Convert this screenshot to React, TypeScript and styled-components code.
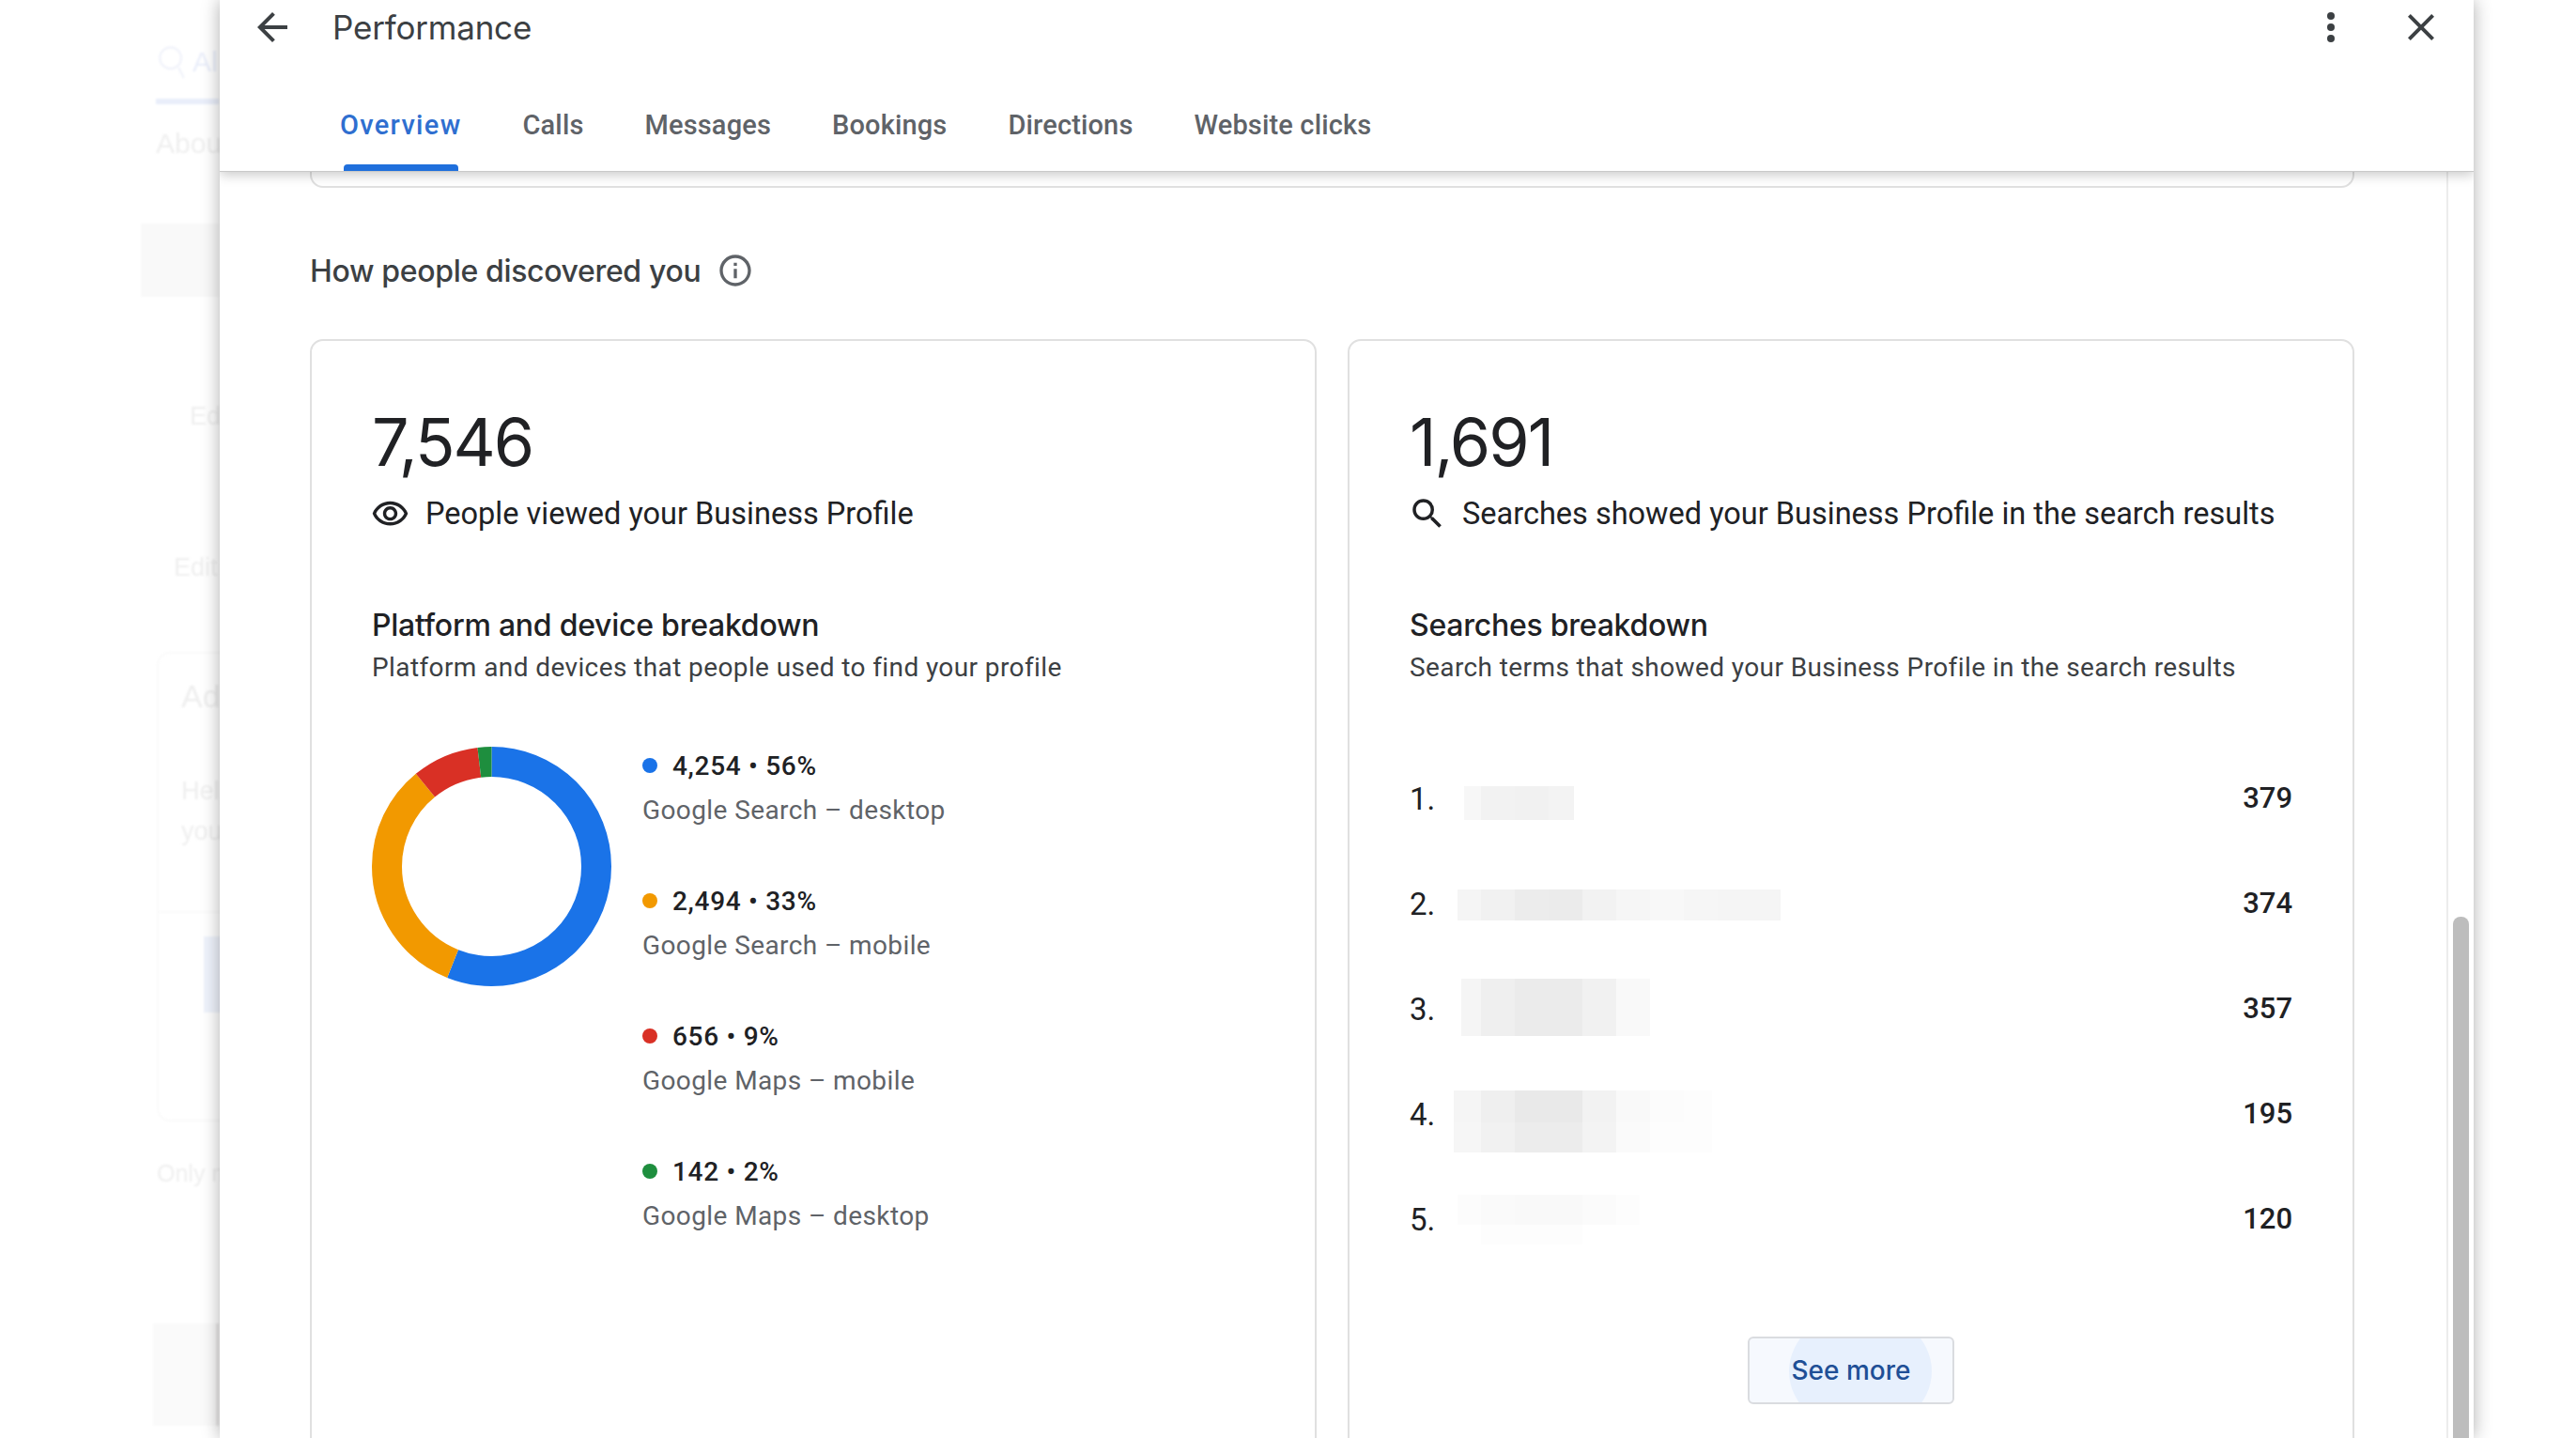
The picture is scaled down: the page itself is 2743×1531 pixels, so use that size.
import React from "react";
import styled, { createGlobalStyle } from "styled-components";

const GlobalStyle = createGlobalStyle`
  html, body {
    margin: 0;
    padding: 0;
    background: #fff;
    font-family: Roboto, "Liberation Sans", sans-serif;
  }
  * {
    box-sizing: border-box;
  }
`;

const Page = styled.div`
  position: relative;
  width: 2743px;
  height: 1531px;
  overflow: hidden;
  background: #fff;
`;

/* faded page behind the dialog */
const Backdrop = styled.div`
  width: 233px;
  height: 100%;
  white-space: nowrap;
  display: flex;
  flex-direction: column;
  font-family: "Liberation Sans", sans-serif;
  color: #efefef;
  filter: blur(0.8px);
`;

const FadedSearch = styled.div`
  display: flex;
  align-items: center;
  gap: 5px;
  height: 50px;
  margin: 41px 0 0 166px;
  font-size: 30px;
  color: #eaeefa;
`;

const FadedUnderline = styled.div`
  height: 6px;
  margin: 14px 0 0 166px;
  background: #e9eefa;
`;

const FadedText = styled.div<{ $top: number; $left: number; $size?: number }>`
  margin: ${(p) => p.$top}px 0 0 ${(p) => p.$left}px;
  font-size: ${(p) => p.$size ?? 27}px;
  line-height: 36px;
`;

const FadedBlock = styled.div<{ $top: number; $left: number; $height: number; $color: string }>`
  height: ${(p) => p.$height}px;
  margin: ${(p) => p.$top}px 0 0 ${(p) => p.$left}px;
  background: ${(p) => p.$color};
`;

const FadedCard = styled.div`
  height: 500px;
  margin: 72px -20px 0 167px;
  padding: 27px 0 0 24px;
  border: 2px solid #fafafa;
  border-radius: 14px;
`;

const FadedCardRule = styled.div`
  height: 2px;
  margin: 67px -24px 0;
  background: #fafafa;
`;

/* dialog */
const Dialog = styled.div`
  position: absolute;
  top: 0;
  left: 234px;
  width: 2400px;
  height: 1531px;
  background: #fff;
  box-shadow: 0 0 18px rgba(0, 0, 0, 0.32);
  overflow: hidden;
`;

const Header = styled.header`
  position: relative;
  z-index: 2;
  height: 183px;
  background: #fff;
  border-bottom: 1px solid #c9c9c9;
  box-shadow: 0 3px 12px rgba(0, 0, 0, 0.22);
`;

const TopRow = styled.div`
  display: flex;
  align-items: center;
  height: 58px;
  padding: 0 32px;
`;

const Title = styled.h1`
  flex: 1;
  margin: 0 0 0 40px;
  font-family: Inter, Roboto, sans-serif;
  font-size: 35px;
  font-weight: 400;
  letter-spacing: -0.2px;
  color: #3c4043;
`;

const HeaderIcon = styled.svg`
  display: block;
  width: 48px;
  height: 48px;
  fill: #3c4043;
`;

const Kebab = styled.svg`
  display: block;
  width: 48px;
  height: 48px;
  margin-right: 48px;
  fill: #3c4043;
`;

const TabRow = styled.nav`
  display: flex;
  gap: 65px;
  height: 98px;
  margin-top: 26px;
  padding-left: 128px;
`;

const Tab = styled.div<{ $active?: boolean }>`
  position: relative;
  display: flex;
  align-items: center;
  font-size: 29px;
  font-weight: 500;
  letter-spacing: ${(p) => (p.$active ? "1.3px" : "0.15px")};
  color: ${(p) => (p.$active ? "#2f6fd0" : "#5f6368")};

  ${(p) =>
    p.$active &&
    `
    &::after {
      content: "";
      position: absolute;
      left: 4px;
      right: 3px;
      bottom: 0;
      height: 7px;
      border-radius: 4px 4px 0 0;
      background: #1f6fdc;
    }
  `}
`;

const Body = styled.div`
  display: flex;
  flex-direction: column;
  padding: 0 127px 0 96px;
`;

const ScrollTrack = styled.div`
  position: absolute;
  top: 183px;
  right: 0;
  bottom: 0;
  width: 29px;
  border-left: 2px solid #ececec;
`;

const ScrollThumb = styled.div`
  position: absolute;
  top: 976px;
  right: 5px;
  bottom: 0;
  width: 17px;
  border-radius: 8px 8px 0 0;
  background: #bdbdbd;
`;

const PrevCardEnd = styled.div`
  height: 17px;
  border: 2px solid #e0e0e0;
  border-top: 0;
  border-radius: 0 0 14px 14px;
`;

const SectionHeading = styled.div`
  display: flex;
  align-items: center;
  gap: 17px;
  height: 40px;
  margin-top: 68px;
  font-family: Inter, Roboto, sans-serif;
  font-size: 32px;
  font-weight: 500;
  letter-spacing: -0.34px;
  color: #3c4043;
`;

const InfoIcon = styled.svg`
  display: block;
  width: 40px;
  height: 40px;
  fill: #5f6368;
`;

const CardRow = styled.div`
  display: flex;
  gap: 33px;
  margin-top: 53px;
`;

const Card = styled.section`
  flex: 1;
  height: 1300px;
  padding: 68px 64px 0;
  border: 2px solid #e0e0e0;
  border-radius: 14px;
`;

const BigNumber = styled.div`
  height: 80px;
  font-family: Inter, Roboto, sans-serif;
  font-size: 70px;
  font-weight: 400;
  line-height: 80px;
  letter-spacing: -2px;
  color: #202124;
`;

const MetricRow = styled.div`
  display: flex;
  align-items: center;
  height: 40px;
  margin-top: 16px;
  font-size: 32.5px;
  color: #202124;
`;

const MetricIcon = styled.svg<{ $size: number; $gap: number; $shift: number }>`
  display: block;
  flex: none;
  width: ${(p) => p.$size}px;
  height: ${(p) => p.$size}px;
  margin-left: ${(p) => p.$shift}px;
  margin-right: ${(p) => p.$gap}px;
  fill: #202124;
`;

const BreakdownTitle = styled.h2`
  height: 40px;
  margin: 79px 0 0;
  font-family: Inter, Roboto, sans-serif;
  font-size: 32px;
  font-weight: 500;
  line-height: 40px;
  letter-spacing: -0.25px;
  color: #202124;
`;

const BreakdownSub = styled.p`
  height: 40px;
  margin: 5px 0 0;
  font-size: 28px;
  line-height: 40px;
  letter-spacing: 0.4px;
  color: #3c4043;
`;

const BreakdownArea = styled.div`
  display: flex;
  gap: 33px;
  margin-top: 64px;
`;

const Donut = styled.svg`
  display: block;
  flex: none;
  width: 255px;
  height: 255px;
`;

const Legend = styled.ul`
  display: flex;
  flex-direction: column;
  gap: 56px;
  margin: 0;
  padding: 0;
  list-style: none;
`;

const LegendValue = styled.div`
  display: flex;
  align-items: center;
  gap: 16px;
  height: 40px;
  font-size: 28px;
  font-weight: 500;
  letter-spacing: 0.7px;
  color: #202124;
`;

const Dot = styled.span<{ $color: string }>`
  width: 16px;
  height: 16px;
  border-radius: 50%;
  background: ${(p) => p.$color};
`;

const LegendLabel = styled.div`
  height: 40px;
  margin-top: 8px;
  font-size: 28px;
  line-height: 40px;
  letter-spacing: 0.4px;
  color: #5f6368;
`;

const TermList = styled.ol`
  margin: 63px 0 0;
  padding: 0;
  list-style: none;
`;

const TermRow = styled.li`
  display: flex;
  align-items: center;
  height: 112px;
  font-size: 33px;
  color: #202124;
`;

const TermIndex = styled.span`
  width: 38px;
`;

const TermMosaic = styled.svg`
  display: block;
  flex: 1;
  height: 112px;
`;

const TermCount = styled.span`
  margin-bottom: 2px;
  font-weight: 500;
  font-size: 31px;
`;

const SeeMoreWrap = styled.div`
  display: flex;
  justify-content: center;
  margin-top: 69px;
`;

const SeeMore = styled.button`
  position: relative;
  width: 220px;
  height: 72px;
  padding: 0;
  overflow: hidden;
  border: 2px solid #dadce0;
  border-radius: 6px;
  background: #f6f9fe;
  font-family: Inter, Roboto, sans-serif;
  font-size: 28px;
  font-weight: 500;
  color: #1f4f96;

  &::before {
    content: "";
    position: absolute;
    top: -30px;
    left: 42px;
    width: 152px;
    height: 130px;
    border-radius: 50%;
    background: #e7f0fd;
  }
`;

const SeeMoreLabel = styled.span`
  position: relative;
`;

const legend = [
  { value: "4,254 • 56%", label: "Google Search – desktop", color: "#1a73e8", share: 56 },
  { value: "2,494 • 33%", label: "Google Search – mobile", color: "#f29900", share: 33 },
  { value: "656 • 9%", label: "Google Maps – mobile", color: "#d93025", share: 9 },
  { value: "142 • 2%", label: "Google Maps – desktop", color: "#1e8e3e", share: 2 },
];

// x, y, w, h, grey value of the pixelated search terms, y inside a 112px row
type Cell = [number, number, number, number, string];
const strip = (x0: number, y: number, h: number, shades: string[]): Cell[] => {
  const edges = [38, 74, 110, 146, 182, 218, 254, 290, 326, 362];
  return shades.map((shade, i) => {
    const left = i === 0 ? x0 : edges[i - 1];
    return [left, y, edges[i] - left, h, shade];
  });
};

const terms: { count: string; cells: Cell[] }[] = [
  {
    count: "379",
    cells: [
      ...strip(20, 43, 36, ["#f7f7f7", "#f2f2f2", "#f1f1f1"]),
      [110, 43, 27, 36, "#f3f3f3"],
    ],
  },
  {
    count: "374",
    cells: strip(13, 41, 33, ["#f5f5f5", "#f1f1f1", "#ececec", "#ebebeb", "#f2f2f2", "#f6f6f6", "#f8f8f8", "#f6f6f6", "#f5f5f5"]).map(
      (c, i) => (i === 8 ? [c[0], c[1], 357 - c[0], c[3], c[4]] as Cell : c),
    ),
  },
  {
    count: "357",
    cells: strip(17, 24, 61, ["#f5f5f5", "#efefef", "#ebebeb", "#ebebeb", "#f1f1f1", "#f9f9f9"]),
  },
  {
    count: "195",
    cells: [
      ...strip(9, 31, 34, ["#f5f5f5", "#efefef", "#e9e9e9", "#e9e9e9", "#f2f2f2", "#f9f9f9", "#fcfcfc"]),
      ...strip(9, 65, 32, ["#f6f6f6", "#f1f1f1", "#ececec", "#ececec", "#f3f3f3", "#fafafa", "#fdfdfd"]),
      [254, 31, 30, 66, "#fdfdfd"],
    ],
  },
  {
    count: "120",
    cells: [
      ...strip(13, 30, 32, ["#fcfcfc", "#fafafa", "#f9f9f9", "#f9f9f9", "#fbfbfb"]),
      [182, 30, 25, 32, "#fdfdfd"],
      [38, 62, 108, 21, "#fdfdfd"],
    ],
  },
];

const RING_R = 111.5;
const RING_LEN = 2 * Math.PI * RING_R;

const App: React.FC = () => {
  let used = 0;

  return (
    <Page>
      <GlobalStyle />
      <Backdrop>
        <FadedSearch>
          <svg width="34" height="40" viewBox="0 0 24 28" fill="none" stroke="#f0f2fa" strokeWidth="1.5">
            <circle cx="11" cy="11" r="8" />
            <path d="M17 18l4 8" />
          </svg>
          Al
        </FadedSearch>
        <FadedUnderline />
        <FadedText $top={24} $left={166} $size={30}>
          About
        </FadedText>
        <FadedBlock $top={67} $left={150} $height={78} $color="#f9f9f9" />
        <FadedText $top={109} $left={202}>
          Edit
        </FadedText>
        <FadedText $top={125} $left={185}>
          Edit
        </FadedText>
        <FadedCard>
          <FadedText $top={0} $left={0} $size={34}>
            Add
          </FadedText>
          <FadedText $top={65} $left={0}>
            Help
          </FadedText>
          <FadedText $top={7} $left={0}>
            you
          </FadedText>
          <FadedCardRule />
          <FadedBlock $top={25} $left={24} $height={81} $color="#eff3fc" />
        </FadedCard>
        <FadedText $top={37} $left={167} $size={25}>
          Only manage
        </FadedText>
        <FadedBlock $top={142} $left={163} $height={109} $color="linear-gradient(90deg, #fafafa 0 66px, #fff 66px 67px, #e9e7e7 67px)" />
      </Backdrop>

      <Dialog>
        <Header>
          <TopRow>
            <HeaderIcon viewBox="0 0 24 24">
              <path d="M20 11H7.83l5.59-5.59L12 4l-8 8 8 8 1.41-1.41L7.83 13H20v-2z" />
            </HeaderIcon>
            <Title>Performance</Title>
            <Kebab viewBox="0 0 48 48">
              <circle cx="24" cy="12" r="4" />
              <circle cx="24" cy="24" r="4" />
              <circle cx="24" cy="36" r="4" />
            </Kebab>
            <HeaderIcon viewBox="0 0 24 24">
              <path d="M19 6.41 17.59 5 12 10.59 6.41 5 5 6.41 10.59 12 5 17.59 6.41 19 12 13.41 17.59 19 19 17.59 13.41 12z" />
            </HeaderIcon>
          </TopRow>
          <TabRow>
            <Tab $active>Overview</Tab>
            <Tab>Calls</Tab>
            <Tab>Messages</Tab>
            <Tab>Bookings</Tab>
            <Tab>Directions</Tab>
            <Tab>Website clicks</Tab>
          </TabRow>
        </Header>

        <Body>
          <PrevCardEnd />
          <SectionHeading>
            How people discovered you
            <InfoIcon viewBox="0 0 24 24">
              <path d="M11 7h2v2h-2zm0 4h2v6h-2zm1-9C6.48 2 2 6.48 2 12s4.48 10 10 10 10-4.48 10-10S17.52 2 12 2zm0 18c-4.41 0-8-3.59-8-8s3.59-8 8-8 8 3.59 8 8-3.59 8-8 8z" />
            </InfoIcon>
          </SectionHeading>

          <CardRow>
            <Card>
              <BigNumber>7,546</BigNumber>
              <MetricRow>
                <MetricIcon viewBox="0 0 24 24" $size={41} $gap={17} $shift={-1}>
                  <path d="M12 6c3.79 0 7.17 2.13 8.82 5.5C19.17 14.87 15.79 17 12 17s-7.17-2.13-8.82-5.5C4.83 8.13 8.21 6 12 6m0-2C7 4 2.73 7.11 1 11.5 2.73 15.89 7 19 12 19s9.27-3.11 11-7.5C21.27 7.11 17 4 12 4zm0 5c1.38 0 2.5 1.12 2.5 2.5S13.38 14 12 14s-2.5-1.12-2.5-2.5S10.62 9 12 9m0-2c-2.48 0-4.5 2.02-4.5 4.5S9.52 16 12 16s4.5-2.02 4.5-4.5S14.48 7 12 7z" />
                </MetricIcon>
                People viewed your Business Profile
              </MetricRow>
              <BreakdownTitle>Platform and device breakdown</BreakdownTitle>
              <BreakdownSub>Platform and devices that people used to find your profile</BreakdownSub>
              <BreakdownArea>
                <Donut viewBox="0 0 255 255">
                  {legend.map((item) => {
                    const dash = (item.share / 100) * RING_LEN;
                    const offset = -(used / 100) * RING_LEN;
                    used += item.share;
                    return (
                      <circle
                        key={item.label}
                        cx="127.5"
                        cy="127.5"
                        r={RING_R}
                        fill="none"
                        stroke={item.color}
                        strokeWidth="32"
                        strokeDasharray={`${dash} ${RING_LEN - dash}`}
                        strokeDashoffset={offset}
                        transform="rotate(-90 127.5 127.5)"
                      />
                    );
                  })}
                </Donut>
                <Legend>
                  {legend.map((item) => (
                    <li key={item.label}>
                      <LegendValue>
                        <Dot $color={item.color} />
                        {item.value}
                      </LegendValue>
                      <LegendLabel>{item.label}</LegendLabel>
                    </li>
                  ))}
                </Legend>
              </BreakdownArea>
            </Card>

            <Card>
              <BigNumber>1,691</BigNumber>
              <MetricRow>
                <MetricIcon viewBox="0 0 24 24" $size={42} $gap={16} $shift={-2}>
                  <path d="M15.5 14h-.79l-.28-.27A6.471 6.471 0 0 0 16 9.5 6.5 6.5 0 1 0 9.5 16c1.61 0 3.09-.59 4.23-1.57l.27.28v.79l5 4.99L20.49 19l-4.99-5zm-6 0C7.01 14 5 11.99 5 9.5S7.01 5 9.5 5 14 7.01 14 9.5 11.99 14 9.5 14z" />
                </MetricIcon>
                Searches showed your Business Profile in the search results
              </MetricRow>
              <BreakdownTitle>Searches breakdown</BreakdownTitle>
              <BreakdownSub>Search terms that showed your Business Profile in the search results</BreakdownSub>
              <TermList>
                {terms.map((term, i) => (
                  <TermRow key={term.count}>
                    <TermIndex>{i + 1}.</TermIndex>
                    <TermMosaic>
                      {term.cells.map(([x, y, w, h, shade], j) => (
                        <rect key={j} x={x} y={y} width={w} height={h} fill={shade} />
                      ))}
                    </TermMosaic>
                    <TermCount>{term.count}</TermCount>
                  </TermRow>
                ))}
              </TermList>
              <SeeMoreWrap>
                <SeeMore>
                  <SeeMoreLabel>See more</SeeMoreLabel>
                </SeeMore>
              </SeeMoreWrap>
            </Card>
          </CardRow>
        </Body>

        <ScrollTrack />
        <ScrollThumb />
      </Dialog>
    </Page>
  );
};

export default App;
